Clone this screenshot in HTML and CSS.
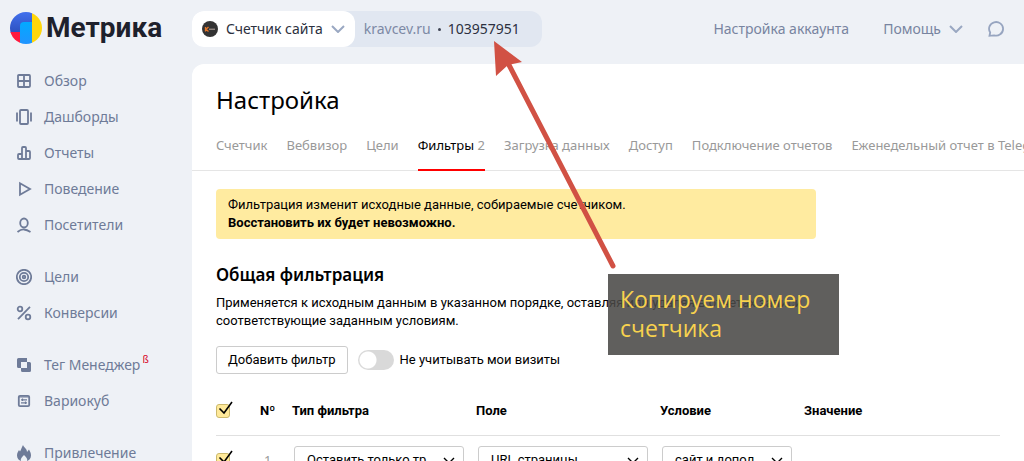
FILE: index.html
```html
<!DOCTYPE html>
<html lang="ru">
<head>
<meta charset="utf-8">
<title>Метрика — Настройка</title>
<link rel="stylesheet" href="styles.css">
</head>
<body>
<div class="app">
  <aside class="sidebar">
    <a class="logo" href="#">
      <svg class="logo-mark" viewBox="0 0 32 32" aria-hidden="true">
        <defs>
          <clipPath id="disc"><circle cx="16" cy="16" r="16"/></clipPath>
          <linearGradient id="blue" x1="0" y1="0" x2="0" y2="1"><stop offset="0" stop-color="#4270ed"/><stop offset="1" stop-color="#2c50bf"/></linearGradient>
          <linearGradient id="sky" x1="0" y1="0" x2="0" y2="1"><stop offset="0" stop-color="#02aaff"/><stop offset="1" stop-color="#2094ff"/></linearGradient>
        </defs>
        <g clip-path="url(#disc)">
          <path fill="url(#blue)" d="M0 0h22v21H0z"/>
          <path fill="#ff193e" d="M0 20h10v12H0z"/>
          <path fill="#ffd60a" d="M22 0h10v32H22z"/>
          <path fill="url(#sky)" d="M10 14q0-4 4-4h8v22H10z"/>
        </g>
      </svg>
      <span>Метрика</span>
    </a>
    <nav class="menu">
      <ul>
        <li><a href="#"><svg viewBox="0 0 16 16"><path d="M2.900 2h10.200q.9 0 .9.900v10.200q0 .9-.9.900H2.900q-.9 0-.9-.9V2.900q0-.9.900-.9zM8 2v12M2 8h12"/></svg>Обзор</a></li>
        <li><a href="#"><svg viewBox="0 0 16 16"><rect x="4" y="1" width="8" height="14" rx="1"/><path d="M1 3.500v9M15 3.500v9"/></svg>Дашборды</a></li>
        <li><a href="#"><svg viewBox="0 0 16 16"><path d="M6 14V3q0-1 1-1h2q1 0 1 1v11M6 9H3q-1 0-1 1v3q0 1 1 1h10q1 0 1-1V7q0-1-1-1h-3"/></svg>Отчеты</a></li>
        <li><a href="#"><svg viewBox="0 0 16 16"><path d="M4 2.200v11.600L14 8z"/></svg>Поведение</a></li>
        <li><a href="#"><svg viewBox="0 0 16 16"><ellipse cx="8" cy="6" rx="3.800" ry="4.500"/><path d="M1.500 15q3.500-2.800 6.500-2.500t6.500 2.500"/></svg>Посетители</a></li>
      </ul>
      <ul>
        <li><a href="#"><svg viewBox="0 0 16 16"><circle cx="8" cy="8" r="7.200"/><circle cx="8" cy="8" r="4.200"/><circle cx="8" cy="8" r="1.300"/></svg>Цели</a></li>
        <li><a href="#"><svg viewBox="0 0 16 16"><circle cx="4" cy="4" r="2.300"/><circle cx="12" cy="12" r="2.300"/><path d="M14 1.800L2 14.200"/></svg>Конверсии</a></li>
      </ul>
      <ul>
        <li><a href="#"><svg class="solid" viewBox="0 0 16 16"><path d="M2.500 1H11v4H5v6H2.500Q1 11 1 9.500v-7Q1 1 2.500 1z"/><path d="M12 5h1.500Q15 5 15 6.500v7q0 1.500-1.500 1.500h-7Q5 15 5 13.500V11h6V5z"/></svg>Тег Менеджер<sup>ß</sup></a></li>
        <li><a href="#"><svg viewBox="0 0 16 16"><rect x="2.800" y="2.800" width="10.400" height="10.400" rx="1.200"/><path class="thin" d="M3 4h10M5 6.800h6M5 9.800h6M6.500 5.500v2.600M9.500 8.500v2.600"/></svg>Вариокуб</a></li>
      </ul>
      <ul>
        <li><a href="#"><svg class="solid" viewBox="0 0 16 16"><path d="M7 0c1 3 4 3.500 4 7l2-2.500c1 2 2 3.500 2 6 0 3-2 5-4 5.500 1-2-1-4-3-6-2 2-4 4-3 6-2-.5-4-2.500-4-5.500C1 8 2 7 3 5l1 1.500C5 5 5.500 3 7 0z"/></svg>Привлечение</a></li>
      </ul>
    </nav>
  </aside>

  <div class="main">
    <header class="topbar">
      <div class="counter">
        <button class="counter-pick" type="button">
          <svg class="favicon" viewBox="0 0 16 16" aria-hidden="true"><circle cx="8" cy="8" r="8" fill="#333"/><path d="M3.500 6v4.500M6.500 6L4 8.300l2.500 2.200" stroke="#e67628" stroke-width="1.300" fill="none"/><path d="M7 8.200h6" stroke="#b9a9a0"/></svg>
          <span>Счетчик сайта</span>
          <svg class="chevron" viewBox="0 0 14 8" aria-hidden="true"><path d="M1 1l6 6 6-6"/></svg>
        </button>
        <span class="counter-info"><a href="#">kravcev.ru</a><i></i><span>103957951</span></span>
      </div>
      <nav class="topnav">
        <a href="#">Настройка аккаунта</a>
        <button type="button">Помощь <svg class="chevron" viewBox="0 0 14 8" aria-hidden="true"><path d="M1 1l6 6 6-6"/></svg></button>
        <button type="button" aria-label="Чат"><svg class="chat" viewBox="0 0 16 16" aria-hidden="true"><path d="M1.500 14.800L2.200 11.500A7 6.800 0 1 1 6 14.300z"/></svg></button>
      </nav>
    </header>

    <main class="panel">
      <h1>Настройка</h1>
      <nav class="tabs">
        <a href="#">Счетчик</a>
        <a href="#">Вебвизор</a>
        <a href="#">Цели</a>
        <a class="active" href="#">Фильтры <span>2</span></a>
        <a href="#">Загрузка данных</a>
        <a href="#">Доступ</a>
        <a href="#">Подключение отчетов</a>
        <a href="#">Еженедельный отчет в Telegram</a>
      </nav>
      <div class="content">
        <p class="warning">Фильтрация изменит исходные данные, собираемые счетчиком.<br><b>Восстановить их будет невозможно.</b></p>
        <h2>Общая фильтрация</h2>
        <p class="lead">Применяется к исходным данным в указанном порядке, оставляя или удаляя в отчетах записи,<br>соответствующие заданным условиям.</p>
        <div class="actions">
          <button class="add" type="button">Добавить фильтр</button>
          <label class="switch"><input type="checkbox" role="switch">Не учитывать мои визиты</label>
        </div>
        <table class="filters">
          <thead>
            <tr>
              <th class="c-check"><label class="tick"><input type="checkbox" checked aria-label="Выбрать все"><svg viewBox="0 0 18 18" aria-hidden="true"><path d="M3.500 8.500L8 13l8-11"/></svg></label></th>
              <th class="c-num">Nº</th>
              <th class="c-type">Тип фильтра</th>
              <th class="c-field">Поле</th>
              <th class="c-cond">Условие</th>
              <th>Значение</th>
            </tr>
          </thead>
          <tbody>
            <tr>
              <td><label class="tick"><input type="checkbox" checked aria-label="Фильтр 1"><svg viewBox="0 0 18 18" aria-hidden="true"><path d="M3.500 8.500L8 13l8-11"/></svg></label></td>
              <td class="num">1</td>
              <td><span class="select"><select aria-label="Тип фильтра"><option>Оставить только тр…</option></select><svg viewBox="0 0 14 8" aria-hidden="true"><path d="M2 1l5 5 5-5"/></svg></span></td>
              <td><span class="select"><select aria-label="Поле"><option>URL страницы</option></select><svg viewBox="0 0 14 8" aria-hidden="true"><path d="M2 1l5 5 5-5"/></svg></span></td>
              <td><span class="select"><select aria-label="Условие"><option>сайт и допол…</option></select><svg viewBox="0 0 14 8" aria-hidden="true"><path d="M2 1l5 5 5-5"/></svg></span></td>
              <td></td>
            </tr>
          </tbody>
        </table>
      </div>
    </main>
  </div>

  <svg class="arrow" viewBox="0 0 124 230" aria-hidden="true"><path d="M15 24L119 225" fill="none" stroke="#d15144" stroke-width="5" stroke-linecap="round"/><path d="M0 0l28 21-14 3-12 11z" fill="#d15144"/></svg>
  <div class="callout">Копируем номер счетчика</div>
</div>
</body>
</html>
```
FILE: styles.css
```css
* { box-sizing: border-box; }
body {
  margin: 0;
  background: #eef1f6;
  color: #000;
  font: 13px/18px "Noto Sans", "Open Sans", sans-serif;
}
h1, h2, p, ul { margin: 0; padding: 0; font-weight: 400; }
a { color: inherit; text-decoration: none; }
button { font: inherit; color: inherit; border: 0; background: none; padding: 0; cursor: pointer; }
svg { flex: none; }

.app { position: relative; display: flex; height: 100vh; overflow: hidden; }

.sidebar { flex: 0 0 192px; color: #6e7b98; }
.logo {
  display: flex; align-items: center; gap: 4px;
  height: 56px; padding-left: 10px;
  color: #1e212c; font-size: 28px; line-height: 56px; font-weight: 700;
  font-family: Roboto, sans-serif;
}
.logo-mark { width: 32px; height: 32px; }
.menu { display: flex; flex-direction: column; gap: 16px; padding-top: 7px; }
.menu ul { list-style: none; }
.menu a { display: flex; align-items: center; height: 36px; padding-left: 16px; font-size: 14px; }
.menu svg { width: 16px; height: 16px; margin-right: 12px; fill: none; stroke: #6e7b98; stroke-width: 1.8; }
.menu svg.solid { fill: #6e7b98; stroke: none; }
.menu .thin { stroke-width: 1.2; }
.menu sup { align-self: flex-start; margin: 4px 0 0 2px; color: #d8001c; font-size: 10px; line-height: 16px; }

.main { flex: 1; min-width: 0; display: flex; flex-direction: column; }
.topbar {
  display: flex; align-items: center; justify-content: space-between;
  padding: 11px 20px 17px 0; color: #7884a0; font-size: 14px;
}
.counter { display: flex; background: #e1e7f1; border-radius: 12px; height: 36px; }
.counter-pick {
  display: flex; align-items: center; gap: 8px;
  padding: 0 10px; border-radius: 12px; background: #fff; color: #2c3040;
}
.favicon { width: 16px; height: 16px; }
.chevron { width: 14px; height: 8px; fill: none; stroke: #9aa8c2; stroke-width: 2; }
.counter-info { display: flex; align-items: center; gap: 7px; padding: 0 22px 0 9px; color: #2c3040; }
.counter-info a { color: #7d89a5; }
.counter-info i { width: 3px; height: 3px; border-radius: 50%; background: #3f4454; }
.topnav { display: flex; align-items: center; gap: 34px; }
.topnav button { display: flex; align-items: center; gap: 8px; }
.topnav button:last-child { margin-left: -9px; }
.chat { width: 16px; height: 16px; fill: none; stroke: #97a5c0; stroke-width: 1.8; }

.panel { flex: 1; min-height: 0; overflow: hidden; background: #fff; border-top-left-radius: 12px; }
h1 { padding: 20px 24px 0; font-size: 24px; line-height: 32px; }
.tabs {
  display: flex; gap: 19px; margin-top: 12px; padding-left: 24px;
  border-bottom: 1px solid #e5e5e5; color: #999; white-space: nowrap;
}
.tabs a { padding: 8px 0 15px; border-bottom: 2px solid transparent; margin-bottom: -1px; }
.tabs .active { color: #000; border-bottom-color: #f00; }
.tabs span { color: #999; }
.content { padding: 18px 24px 0; }
.warning { max-width: 600px; padding: 7px 12px; border-radius: 4px; background: #ffeba0; }
h2 { margin-top: 25px; font-size: 17px; line-height: 22px; font-weight: 600; }
.lead { margin-top: 8px; }
.actions { display: flex; align-items: center; gap: 10px; margin-top: 16px; }
.add { height: 28px; padding: 0 11px; border: 1px solid #ccc; border-radius: 3px; background: #fff; }
.warning, .lead, .add, .switch, .select select, .filters th { font-family: Roboto, "Liberation Sans", sans-serif; font-size: 13px; }
.switch { display: flex; align-items: center; gap: 6px; }
.switch input {
  appearance: none; width: 36px; height: 20px; margin: 0; border-radius: 10px;
  background: radial-gradient(circle at 10px 10px, #fff 8px, #d9d9d9 9px);
}

.filters { width: 100%; margin-top: 14px; border-collapse: collapse; table-layout: fixed; text-align: left; }
.filters th { height: 47px; padding: 0; border-bottom: 1px solid #e0e0e0; font-weight: 700; }
.filters td { padding: 10px 12px 10px 2px; }
.filters td:first-child { padding-left: 0; }
.filters .num { padding-left: 4px; color: #999; }
.c-check { width: 44px; }
.c-num { width: 32px; }
.c-type, .c-field { width: 184px; }
.c-cond { width: 144px; }
.tick { position: relative; display: block; width: 14px; height: 14px; }
.tick input {
  appearance: none; display: block; width: 14px; height: 14px; margin: 0;
  border: 1px solid #ccb96c; border-radius: 3px; background: #ffe999;
}
.tick svg { position: absolute; left: 0; top: -4px; width: 18px; height: 18px; fill: none; stroke: #000; stroke-width: 1.6; }
.select { position: relative; display: block; }
.select select {
  appearance: none; display: block; width: 100%; height: 28px; padding: 0 28px 0 12px;
  border: 1px solid #ccc; border-radius: 3px; background: #fff; color: #000;
}
.select svg { position: absolute; right: 8px; top: 11px; width: 14px; height: 8px; fill: none; stroke: #000; stroke-width: 1.4; }

.arrow { position: absolute; left: 494px; top: 41px; width: 124px; height: 230px; pointer-events: none; }
.callout {
  position: absolute; left: 608px; top: 274px; width: 231px; padding: 11px 12px 12px;
  background: rgba(74, 73, 71, 0.88); color: #f8d24e;
  font-family: "Open Sans", sans-serif; font-size: 23px; line-height: 29px;
}
```
